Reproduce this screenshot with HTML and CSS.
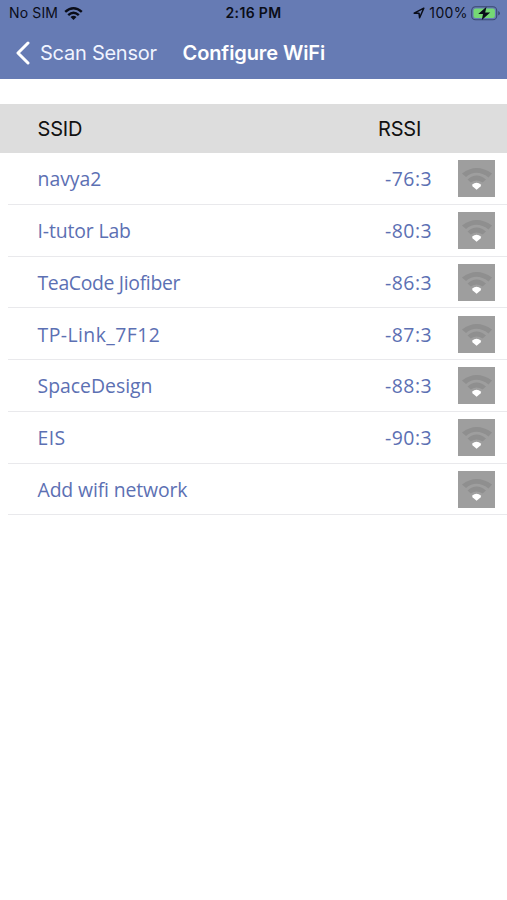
FILE: index.html
```
<!DOCTYPE html>
<html lang="en">
<head>
<meta charset="utf-8">
<title>Configure WiFi</title>
<link rel="stylesheet" href="styles.css">
</head>
<body>
<svg class="defs" aria-hidden="true">
  <symbol id="signal" viewBox="0 0 37 37">
    <path d="M4 13.500Q18.500 2.500 34 13.500L30.500 17.500Q18.500 8.500 8 17Z" fill="#8f8f8f"/>
    <path d="M9.500 19.500Q18.500 11.500 28 19.500L24.500 22.500Q18.500 18.500 12.800 22.500Z" fill="#8f8f8f"/>
    <path d="M14 24.700Q18.500 21 23.200 24.700L22.500 26.500L18.600 29.800L14.700 26.500Z" fill="#fff"/>
  </symbol>
</svg>
<header class="top">
  <div class="status">
    <div class="carrier"><span>No SIM</span>
      <svg width="19" height="13" viewBox="0 0 19 13"><g fill="none" stroke="#0a0d18" stroke-width="2.500"><path d="M1.200 4.900Q9.500-2.300 17.800 4.900"/><path d="M4.200 8.100Q9.500 3.500 14.800 8.100"/></g><path d="M6.500 10Q9.500 7.500 12.500 10L9.500 13Z" fill="#0a0d18"/></svg>
    </div>
    <div class="clock">2:16 PM</div>
    <div class="power">
      <svg width="12" height="12" viewBox="0 0 12 12"><path d="M1.200 6.200L10.800 1.200L6.600 10.800L6 6.200Z" fill="none" stroke="#0a0d18" stroke-width="1.500" stroke-linejoin="round"/></svg>
      <span class="percent">100%</span>
      <svg class="battery" width="30" height="15" viewBox="0 0 30 15"><rect x=".7" y=".7" width="25" height="13" rx="3.800" fill="none" stroke="#3b4a70" stroke-width="1.100"/><rect x="2.500" y="2.500" width="21.400" height="9.400" rx="2" fill="#75d874"/><path d="M27.200 5v4.600Q29 8.800 29 7.300T27.200 5Z" fill="#3b4a70"/><path d="M15.500.8L7.200 8.100H12L10.800 14L19.200 6.500H14.200Z" fill="#0a0d18"/></svg>
    </div>
  </div>
  <nav class="nav">
    <svg class="back" width="15" height="24" viewBox="0 0 15 24"><path d="M13 2L3 12L13 22" fill="none" stroke="#fff" stroke-width="3" stroke-linecap="round" stroke-linejoin="round"/></svg>
    <span class="parent">Scan Sensor</span>
    <h1>Configure WiFi</h1>
  </nav>
</header>
<main>
  <div class="head"><span class="ssid">SSID</span><span>RSSI</span></div>
  <ul>
    <li><span class="name">navya2</span><span class="rssi">-76:3</span><svg class="icon"><use href="#signal"/></svg></li>
    <li><span class="name snug">I-tutor Lab</span><span class="rssi">-80:3</span><svg class="icon"><use href="#signal"/></svg></li>
    <li><span class="name tight">TeaCode Jiofiber</span><span class="rssi">-86:3</span><svg class="icon"><use href="#signal"/></svg></li>
    <li><span class="name wide">TP-Link_7F12</span><span class="rssi">-87:3</span><svg class="icon"><use href="#signal"/></svg></li>
    <li><span class="name">SpaceDesign</span><span class="rssi">-88:3</span><svg class="icon"><use href="#signal"/></svg></li>
    <li><span class="name wide">EIS</span><span class="rssi">-90:3</span><svg class="icon"><use href="#signal"/></svg></li>
    <li><span class="name snug">Add wifi network</span><span class="rssi"></span><svg class="icon"><use href="#signal"/></svg></li>
  </ul>
</main>
</body>
</html>
```
FILE: styles.css
```
* { box-sizing: border-box; }
body { margin: 0; background: #fff; font-family: Inter, "Liberation Sans", sans-serif; }
svg { display: block; flex: none; }
.defs { display: none; }
.top { height: 79px; background: #667bb4; }
.status { height: 26px; display: grid; grid-template-columns: 1fr auto 1fr; align-items: center; color: #0a0d18; font-size: 14px; line-height: 26px; }
.carrier { display: flex; align-items: center; gap: 6px; padding-left: 9px; letter-spacing: .15px; }
.clock { font-weight: 600; font-size: 14px; letter-spacing: .35px; }
.power { display: flex; align-items: center; justify-content: flex-end; gap: 4px; padding-right: 6px; }
.percent { letter-spacing: .4px; }
.battery { margin-left: -1px; }
.nav { height: 53px; display: flex; align-items: center; padding-left: 15px; color: #fff; white-space: nowrap; }
.parent { width: 142.500px; margin-left: 10px; font-size: 20px; letter-spacing: -.25px; color: #f0f4ff; }
h1 { margin: 0; font-size: 20px; font-weight: 600; letter-spacing: -.1px; }
.head { height: 49px; margin-top: 24.500px; padding: 2px 0 0 37.500px; display: flex; align-items: center; background: #ddd; color: #111; font-size: 20px; letter-spacing: -.2px; }
.ssid { width: 340.500px; }
ul { list-style: none; margin: 0; padding: .5px 0 0 8px; }
li { height: 51.750px; display: flex; align-items: center; padding: 1px 12px 0 29.500px; border-bottom: 1.500px solid #e9e9ec; font-family: "Open Sans", sans-serif; font-size: 19.400px; color: #5c70b3; white-space: nowrap; }
.name { flex: 1; }
.snug { letter-spacing: -.13px; }
.tight { letter-spacing: -.33px; }
.wide { letter-spacing: .45px; }
.rssi { width: 73px; letter-spacing: .5px; }
.icon { width: 37px; height: 37px; background: #9e9e9e; }
```
